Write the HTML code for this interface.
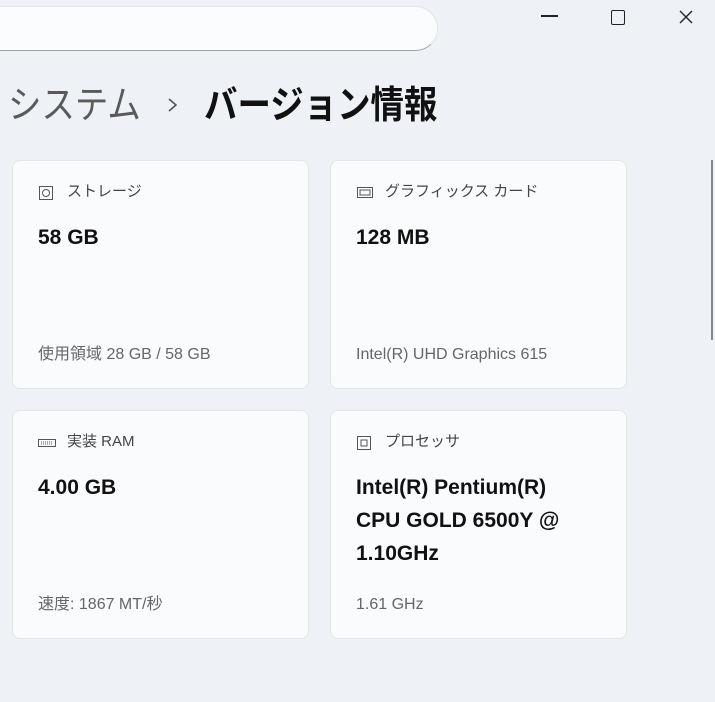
<!DOCTYPE html>
<html><head><meta charset="utf-8"><style>
body{margin:0;width:715px;height:702px;background:#eef2f7;position:relative;overflow:hidden;font-family:"Liberation Sans","Noto Sans CJK JP",sans-serif;}
.search{position:absolute;left:-20px;top:6px;width:458px;height:45px;background:#fbfcfe;border:1px solid #e2e5ea;border-bottom:1px solid #a0a4aa;border-radius:23px;box-sizing:border-box;}
.title{position:absolute;top:80px;font-size:38px;line-height:52px;white-space:nowrap;transform:scaleX(0.88);transform-origin:0 0;}
.card{position:absolute;width:297px;height:229px;background:#fafbfd;border:1px solid #e3e5e9;border-radius:8px;box-sizing:border-box;}
.lab{position:absolute;left:54px;top:21px;font-size:15px;line-height:20px;color:#444;}
.ic{position:absolute;left:25px;top:24px;}
.val{position:absolute;left:25px;top:60px;font-size:21px;font-weight:bold;color:#111;line-height:33px;}
.ft{position:absolute;left:25px;top:184px;font-size:16px;line-height:20px;color:#666;}
</style></head><body>
<div class="search"></div>
<div style="position:absolute;left:541px;top:15px;width:17px;height:1.5px;background:#222"></div>
<div style="position:absolute;left:611px;top:10px;width:12px;height:13px;border:1.5px solid #222;border-radius:2px"></div>
<svg style="position:absolute;left:679px;top:10px" width="14" height="14"><path d="M1 1L13 13M13 1L1 13" stroke="#222" stroke-width="1.4"/></svg>
<div class="title" style="left:8px;color:#5a5a5a">システム</div>
<svg style="position:absolute;left:167px;top:97px" width="12" height="16"><path d="M2 2L9 8L2 14" fill="none" stroke="#555" stroke-width="1.6"/></svg>
<div class="title" style="left:204px;color:#111;font-weight:bold">バージョン情報</div>
<div style="position:absolute;left:711px;top:160px;width:2px;height:180px;background:#888"></div>

<div class="card" style="left:12px;top:160px">
<svg class="ic" width="16" height="16"><rect x="1.5" y="1.5" width="13" height="13" fill="none" stroke="#555"/><circle cx="8" cy="8" r="3.5" fill="none" stroke="#555"/></svg>
<div class="lab">ストレージ</div><div class="val">58 GB</div><div class="ft">使用領域 28 GB / 58 GB</div></div>

<div class="card" style="left:330px;top:160px">
<svg class="ic" width="18" height="16"><rect x="1.5" y="2.5" width="15" height="10" fill="none" stroke="#555"/><rect x="4" y="5" width="10" height="5" fill="none" stroke="#555"/></svg>
<div class="lab">グラフィックス カード</div><div class="val">128 MB</div><div class="ft">Intel(R) UHD Graphics 615</div></div>

<div class="card" style="left:12px;top:410px">
<svg class="ic" width="18" height="16"><rect x="0.5" y="4.5" width="17" height="7" fill="none" stroke="#555"/><path d="M3 7h12M3 9h12" stroke="#555" stroke-dasharray="1 1"/></svg>
<div class="lab">実装 RAM</div><div class="val">4.00 GB</div><div class="ft">速度: 1867 MT/秒</div></div>

<div class="card" style="left:330px;top:410px">
<svg class="ic" width="16" height="16"><rect x="1.5" y="1.5" width="13" height="13" fill="none" stroke="#555"/><rect x="5" y="5" width="6" height="6" fill="none" stroke="#555"/></svg>
<div class="lab">プロセッサ</div><div class="val">Intel(R) Pentium(R)<br>CPU GOLD 6500Y @<br>1.10GHz</div><div class="ft">1.61 GHz</div></div>
</body></html>
